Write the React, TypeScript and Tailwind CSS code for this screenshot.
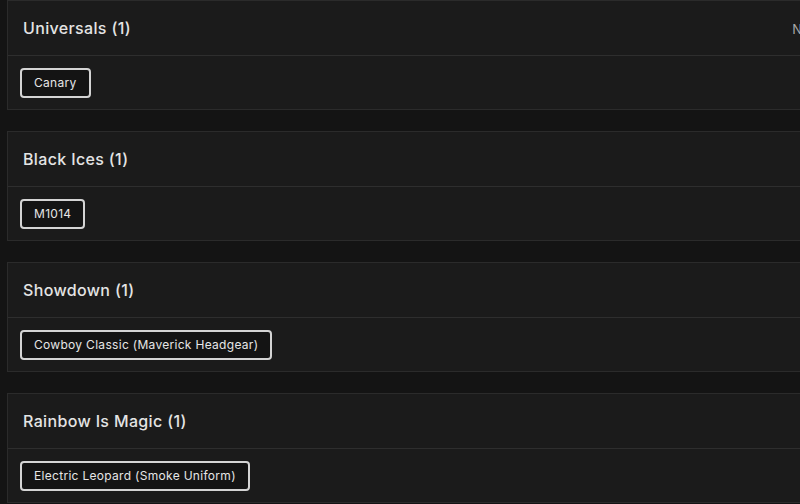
const collections = [
  { name: 'Universals', items: ['Canary'], note: 'New' },
  { name: 'Black Ices', items: ['M1014'] },
  { name: 'Showdown', items: ['Cowboy Classic (Maverick Headgear)'] },
  { name: 'Rainbow Is Magic', items: ['Electric Leopard (Smoke Uniform)'] },
];

const CollectionCard = ({ name, items, note }: { name: string; items: string[]; note?: string }) => {
  return (
    <div className="w-[830px] h-[110px] shrink-0 flex flex-col bg-[#1b1b1b] border border-[#2b2b2b]">
      <div className="h-[55px] flex items-center pl-[15px] pr-4 border-b border-[#2e2e2e]">
        <h2 className="text-[16px] font-medium text-[#e4e4e4] tracking-[0.35px] -mt-[1px]">
          {name} ({items.length})
        </h2>
        {note && <span className="ml-auto mt-1 text-[13px] text-[#a8a8a8]">{note}</span>}
      </div>
      <div className="flex-1 flex items-center gap-2 px-3 pt-[1px]">
        {items.map((item) => (
          <span
            key={item}
            className="h-[30px] flex items-center px-3 rounded-[4px] border-2 border-[#d4d4d4] bg-[#141414] text-[12px] tracking-[0.3px] text-[#e6e6e6]"
          >
            {item}
          </span>
        ))}
      </div>
    </div>
  );
};

export default function App() {
  return (
    <div
      className="w-[800px] h-[504px] overflow-hidden bg-[#141414] pl-[7px] flex flex-col gap-[21px]"
      style={{ fontFamily: 'Inter, "Noto Sans", sans-serif' }}
    >
      {collections.map((c) => (
        <CollectionCard key={c.name} {...c} />
      ))}
    </div>
  );
}
